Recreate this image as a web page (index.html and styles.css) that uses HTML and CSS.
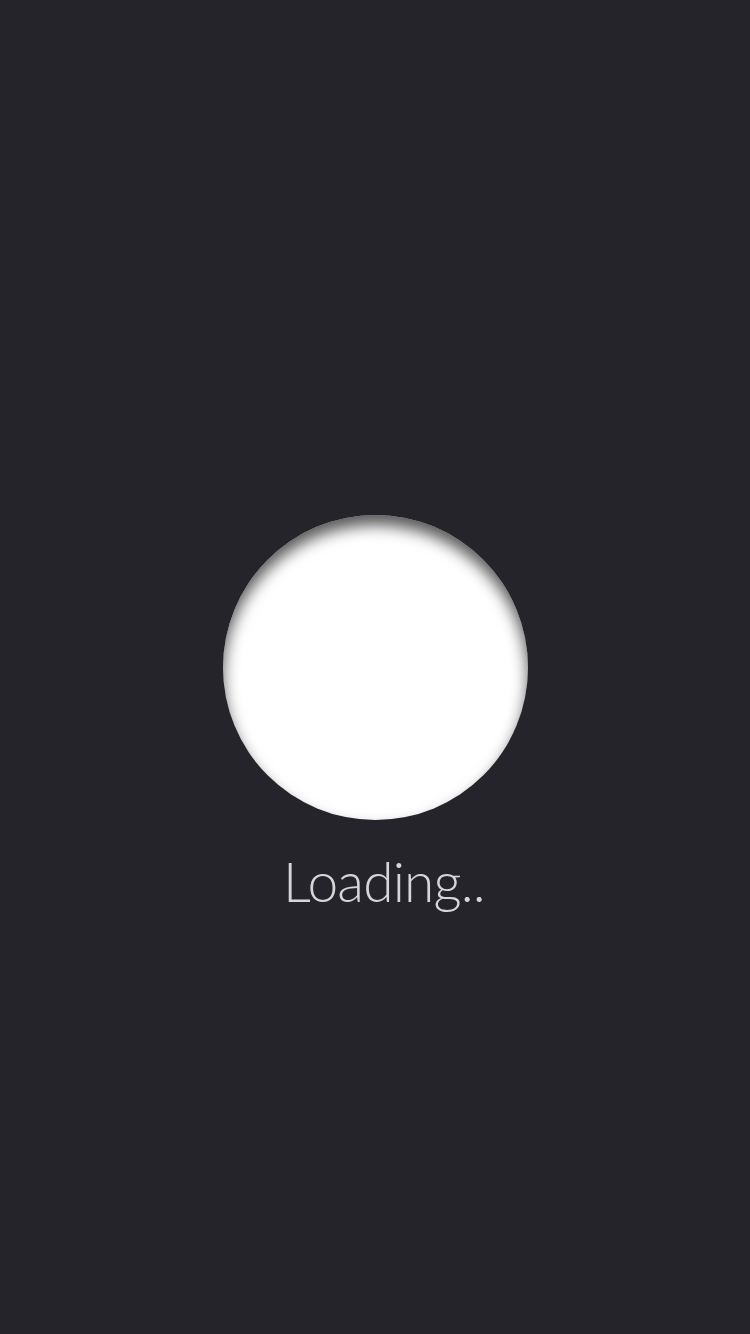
FILE: index.html
```html
<!DOCTYPE html>
<html lang="en">
<head>
<meta charset="utf-8">
<title>Loading</title>
<link rel="stylesheet" href="styles.css">
</head>
<body>
<main class="screen">
  <div class="top"></div>
  <div class="orb"></div>
  <p class="label">Loading..</p>
</main>
</body>
</html>
```

FILE: styles.css
```css
html, body {
  margin: 0;
  padding: 0;
  background: #25242a;
}
.screen {
  height: 1334px;
  display: grid;
  grid-template-rows: 1fr auto 1fr;
  justify-items: center;
}
.orb {
  width: 305px;
  height: 305px;
  border-radius: 50%;
  background: #ffffff;
  box-shadow: inset 0 10px 15px rgba(0, 0, 0, 0.65);
}
.label {
  margin: 28px 0 0;
  padding-left: 18px;
  font-family: Lato, "Open Sans", sans-serif;
  font-weight: 300;
  font-size: 55px;
  line-height: 1.2;
  color: #d6d6d8;
  letter-spacing: -0.8px;
  align-self: start;
}
```
